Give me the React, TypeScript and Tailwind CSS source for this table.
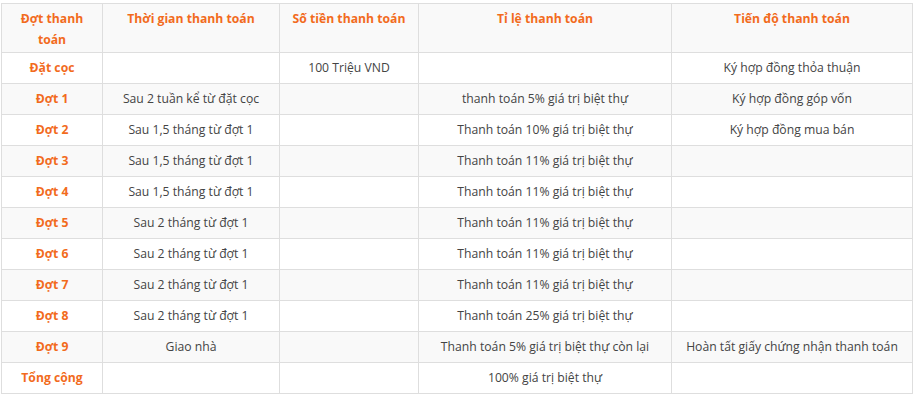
import React from "react";

const rows: [string, string, string, string, string][] = [
  ["Đặt cọc", "", "100 Triệu VND", "", "Ký hợp đồng thỏa thuận"],
  ["Đợt 1", "Sau 2 tuần kể từ đặt cọc", "", "thanh toán 5% giá trị biệt thự", "Ký hợp đồng góp vốn"],
  ["Đợt 2", "Sau 1,5 tháng từ đợt 1", "", "Thanh toán 10% giá trị biệt thự", "Ký hợp đồng mua bán"],
  ["Đợt 3", "Sau 1,5 tháng từ đợt 1", "", "Thanh toán 11% giá trị biệt thự", ""],
  ["Đợt 4", "Sau 1,5 tháng từ đợt 1", "", "Thanh toán 11% giá trị biệt thự", ""],
  ["Đợt 5", "Sau 2 tháng từ đợt 1", "", "Thanh toán 11% giá trị biệt thự", ""],
  ["Đợt 6", "Sau 2 tháng từ đợt 1", "", "Thanh toán 11% giá trị biệt thự", ""],
  ["Đợt 7", "Sau 2 tháng từ đợt 1", "", "Thanh toán 11% giá trị biệt thự", ""],
  ["Đợt 8", "Sau 2 tháng từ đợt 1", "", "Thanh toán 25% giá trị biệt thự", ""],
  ["Đợt 9", "Giao nhà", "", "Thanh toán 5% giá trị biệt thự còn lại", "Hoàn tất giấy chứng nhận thanh toán"],
  ["Tổng cộng", "", "", "100% giá trị biệt thự", ""],
];

const headers = ["Đợt thanh toán", "Thời gian thanh toán", "Số tiền thanh toán", "Tỉ lệ thanh toán", "Tiến độ thanh toán"];

export default function App() {
  return (
    <div className="bg-white w-[916px] h-[403px] pt-[3px] pl-[1px]" style={{ fontFamily: '"Open Sans", "Noto Sans", sans-serif' }}>
      <table className="table-fixed border-collapse w-[912px] text-[12.2px] text-[#444]">
        <colgroup>
          <col className="w-[101px]" />
          <col className="w-[177px]" />
          <col className="w-[139px]" />
          <col className="w-[253px]" />
          <col className="w-[241px]" />
        </colgroup>
        <thead>
          <tr className="bg-[#f9f9f9] h-[49px]">
            {headers.map((h, i) => (
              <th
                key={i}
                className={`border border-[#dedede] align-top font-bold text-[#f26b1d] text-center leading-[21px] pt-[4px] ${i === 0 ? "px-[14px]" : "px-2"}`}
              >
                {h}
              </th>
            ))}
          </tr>
        </thead>
        <tbody>
          {rows.map((r, ri) => (
            <tr key={ri} className={`h-[31px] ${ri % 2 === 1 ? "bg-[#f9f9f9]" : "bg-white"}`}>
              {r.map((c, ci) => (
                <td
                  key={ci}
                  className={`border border-[#dedede] text-center align-middle px-2 leading-[18px] whitespace-nowrap ${ci === 0 ? "font-bold text-[#f26b1d]" : ""}`}
                >
                  {c}
                </td>
              ))}
            </tr>
          ))}
        </tbody>
      </table>
    </div>
  );
}
